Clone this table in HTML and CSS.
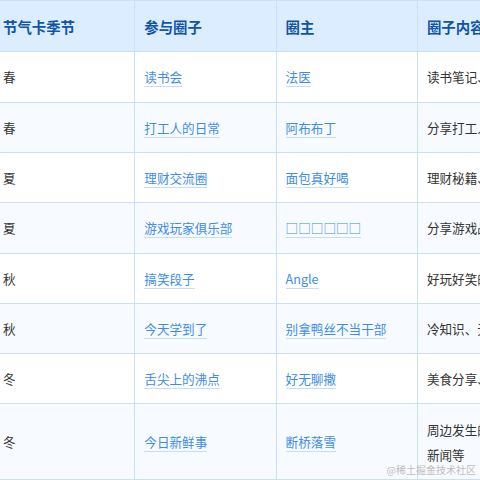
FILE: index.html
```html
<!DOCTYPE html>
<html lang="zh-CN">
<head>
<meta charset="utf-8">
<link rel="stylesheet" href="styles.css">
</head>
<body>
<div class="page">
  <div class="shift">
    <div class="scaled">
      <table class="tbl">
        <colgroup><col class="c"><col class="c"><col class="c"><col class="c"></colgroup>
        <thead>
          <tr><th>节气卡季节</th><th>参与圈子</th><th>圈主</th><th>圈子内容</th></tr>
        </thead>
        <tbody>
          <tr><td>春</td><td><a class="lnk">读书会</a></td><td><a class="lnk">法医</a></td><td>读书笔记、好书分享</td></tr>
          <tr><td>春</td><td><a class="lnk">打工人的日常</a></td><td><a class="lnk">阿布布丁</a></td><td>分享打工人的日常</td></tr>
          <tr><td>夏</td><td><a class="lnk">理财交流圈</a></td><td><a class="lnk">面包真好喝</a></td><td>理财秘籍、理财知识</td></tr>
          <tr><td>夏</td><td><a class="lnk">游戏玩家俱乐部</a></td><td><a class="lnk">□□□□□□</a></td><td>分享游戏战绩</td></tr>
          <tr><td>秋</td><td><a class="lnk">搞笑段子</a></td><td><a class="lnk">Angle</a></td><td>好玩好笑的段子</td></tr>
          <tr><td>秋</td><td><a class="lnk">今天学到了</a></td><td><a class="lnk">别拿鸭丝不当干部</a></td><td>冷知识、无用知识</td></tr>
          <tr><td>冬</td><td><a class="lnk">舌尖上的沸点</a></td><td><a class="lnk">好无聊撒</a></td><td>美食分享、美食探店</td></tr>
          <tr><td>冬</td><td><a class="lnk">今日新鲜事</a></td><td><a class="lnk">断桥落雪</a></td><td>周边发生的新鲜事、新闻等</td></tr>
        </tbody>
      </table>
    </div>
  </div>
  <div class="mark">@稀土掘金技术社区</div>
</div>
</body>
</html>
```

FILE: styles.css
```css
html, body {
  margin: 0;
  padding: 0;
  background: #ffffff;
  overflow: hidden;
}
.page {
  position: relative;
  width: 480px;
  height: 480px;
  overflow: hidden;
}
.shift {
  margin-left: -7px;
}
.scaled {
  zoom: 0.9;
}
.tbl {
  border-collapse: collapse;
  table-layout: fixed;
  width: 628px;
  font-family: "Noto Sans CJK SC", "Noto Sans", sans-serif;
}
.c {
  width: 157px;
}
.tbl th,
.tbl td {
  border: 2px solid #c8e0fa;
  padding: 13.4px 10px;
  line-height: 28px;
  text-align: left;
  vertical-align: middle;
}
.tbl th {
  background: #dcedff;
  color: #0f55a6;
  font-size: 16px;
  font-weight: 700;
  padding-top: 14px;
  padding-bottom: 14px;
}
.tbl td {
  font-size: 14px;
  color: #333333;
  background: #ffffff;
}
.tbl tbody tr:nth-child(even) td {
  background: #f7fbff;
}
.lnk {
  color: #3d8de6;
  text-decoration: none;
  border-bottom: 1px solid #c6ddf7;
}
.mark {
  position: absolute;
  right: 4px;
  bottom: 3px;
  font-family: "Noto Sans CJK SC", sans-serif;
  font-size: 10px;
  color: #bdbdbd;
}
```
